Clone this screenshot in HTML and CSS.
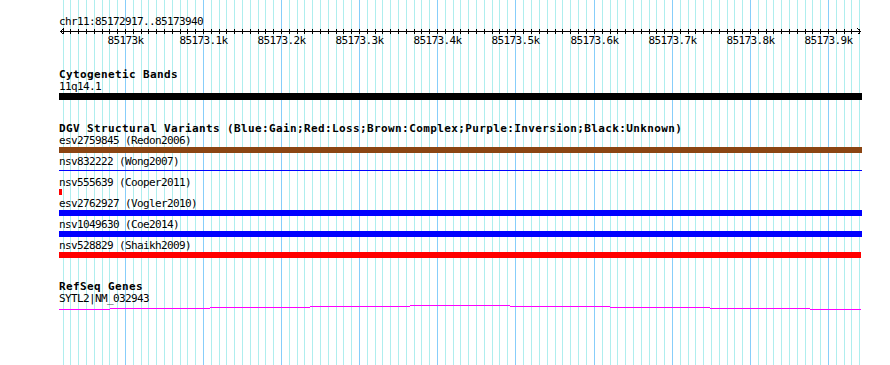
FILE: index.html
```html
<!DOCTYPE html>
<html lang="en">
<head>
<meta charset="utf-8">
<title>GBrowse details</title>
<link rel="stylesheet" href="styles.css">
</head>
<body>
<svg class="grid" width="890" height="365" viewBox="0 0 890 365" aria-hidden="true">
  <path class="grid-minor" d="M63.5 0V365M70.5 0V365M78.5 0V365M86.5 0V365M94.5 0V365M102.5 0V365M109.5 0V365M117.5 0V365M133.5 0V365M141.5 0V365M148.5 0V365M156.5 0V365M164.5 0V365M172.5 0V365M180.5 0V365M187.5 0V365M195.5 0V365M211.5 0V365M219.5 0V365M226.5 0V365M234.5 0V365M242.5 0V365M250.5 0V365M258.5 0V365M265.5 0V365M273.5 0V365M289.5 0V365M297.5 0V365M304.5 0V365M312.5 0V365M320.5 0V365M328.5 0V365M336.5 0V365M343.5 0V365M351.5 0V365M367.5 0V365M375.5 0V365M382.5 0V365M390.5 0V365M398.5 0V365M406.5 0V365M414.5 0V365M421.5 0V365M429.5 0V365M445.5 0V365M453.5 0V365M460.5 0V365M468.5 0V365M476.5 0V365M484.5 0V365M492.5 0V365M499.5 0V365M507.5 0V365M523.5 0V365M531.5 0V365M539.5 0V365M547.5 0V365M555.5 0V365M562.5 0V365M570.5 0V365M578.5 0V365M586.5 0V365M602.5 0V365M610.5 0V365M617.5 0V365M625.5 0V365M633.5 0V365M641.5 0V365M649.5 0V365M656.5 0V365M664.5 0V365M680.5 0V365M688.5 0V365M695.5 0V365M703.5 0V365M711.5 0V365M719.5 0V365M727.5 0V365M734.5 0V365M742.5 0V365M758.5 0V365M766.5 0V365M773.5 0V365M781.5 0V365M789.5 0V365M797.5 0V365M805.5 0V365M812.5 0V365M820.5 0V365M836.5 0V365M844.5 0V365M851.5 0V365M859.5 0V365"/>
  <path class="grid-major" d="M125.5 0V365M203.5 0V365M281.5 0V365M359.5 0V365M437.5 0V365M515.5 0V365M594.5 0V365M672.5 0V365M750.5 0V365M828.5 0V365"/>
</svg>

<main class="panel">
  <div class="coord">chr11:85172917..85173940</div>

  <svg class="ruler" width="890" height="20" viewBox="0 0 890 20">
    <rect class="ink" x="60" y="3" width="801" height="1"/>
    <path class="tick" d="M63.5 1V6M70.5 1V6M78.5 1V6M86.5 1V6M94.5 1V6M102.5 1V6M109.5 1V6M117.5 1V6M125.5 1V6M133.5 1V6M141.5 1V6M148.5 1V6M156.5 1V6M164.5 1V6M172.5 1V6M180.5 1V6M187.5 1V6M195.5 1V6M203.5 1V6M211.5 1V6M219.5 1V6M226.5 1V6M234.5 1V6M242.5 1V6M250.5 1V6M258.5 1V6M265.5 1V6M273.5 1V6M281.5 1V6M289.5 1V6M297.5 1V6M304.5 1V6M312.5 1V6M320.5 1V6M328.5 1V6M336.5 1V6M343.5 1V6M351.5 1V6M359.5 1V6M367.5 1V6M375.5 1V6M382.5 1V6M390.5 1V6M398.5 1V6M406.5 1V6M414.5 1V6M421.5 1V6M429.5 1V6M437.5 1V6M445.5 1V6M453.5 1V6M460.5 1V6M468.5 1V6M476.5 1V6M484.5 1V6M492.5 1V6M499.5 1V6M507.5 1V6M515.5 1V6M523.5 1V6M531.5 1V6M539.5 1V6M547.5 1V6M555.5 1V6M562.5 1V6M570.5 1V6M578.5 1V6M586.5 1V6M594.5 1V6M602.5 1V6M610.5 1V6M617.5 1V6M625.5 1V6M633.5 1V6M641.5 1V6M649.5 1V6M656.5 1V6M664.5 1V6M672.5 1V6M680.5 1V6M688.5 1V6M695.5 1V6M703.5 1V6M711.5 1V6M719.5 1V6M727.5 1V6M734.5 1V6M742.5 1V6M750.5 1V6M758.5 1V6M766.5 1V6M773.5 1V6M781.5 1V6M789.5 1V6M797.5 1V6M805.5 1V6M812.5 1V6M820.5 1V6M828.5 1V6M836.5 1V6M844.5 1V6M851.5 1V6M859.5 1V6"/>
    <path class="arrow" d="M63.5 0.5L60.5 3.5L63.5 6.5M857.5 0.5L860.5 3.5L857.5 6.5"/>
    <g class="ruler-labels">
      <text x="125.5" y="16">85173k</text>
      <text x="203.5" y="16">85173.1k</text>
      <text x="281.5" y="16">85173.2k</text>
      <text x="359.5" y="16">85173.3k</text>
      <text x="437.5" y="16">85173.4k</text>
      <text x="515.5" y="16">85173.5k</text>
      <text x="594.5" y="16">85173.6k</text>
      <text x="672.5" y="16">85173.7k</text>
      <text x="750.5" y="16">85173.8k</text>
      <text x="828.5" y="16">85173.9k</text>
    </g>
  </svg>

  <section class="track track-cyto">
    <h2 class="track-title">Cytogenetic Bands</h2>
    <div class="feat-label">11q14.1</div>
    <div class="bar bar-band"></div>
  </section>

  <section class="track track-dgv">
    <h2 class="track-title title-tight">DGV Structural Variants (Blue:Gain;Red:Loss;Brown:Complex;Purple:Inversion;Black:Unknown)</h2>
    <div class="feat">
      <div class="feat-label">esv2759845 (Redon2006)</div>
      <div class="bar bar-brown"></div>
    </div>
    <div class="feat">
      <div class="feat-label">nsv832222 (Wong2007)</div>
      <div class="thin-line"></div>
    </div>
    <div class="feat">
      <div class="feat-label">nsv555639 (Cooper2011)</div>
      <div class="bar bar-red bar-tiny"></div>
    </div>
    <div class="feat">
      <div class="feat-label">esv2762927 (Vogler2010)</div>
      <div class="bar bar-blue"></div>
    </div>
    <div class="feat">
      <div class="feat-label">nsv1049630 (Coe2014)</div>
      <div class="bar bar-blue"></div>
    </div>
    <div class="feat">
      <div class="feat-label">nsv528829 (Shaikh2009)</div>
      <div class="bar bar-red bar-short"></div>
    </div>
  </section>

  <section class="track track-genes">
    <h2 class="track-title">RefSeq Genes</h2>
    <div class="feat-label">SYTL2|NM_032943</div>
    <svg class="gene" width="890" height="6" viewBox="0 0 890 6">
      <rect x="59" y="4" width="51" height="1"/>
      <rect x="110" y="3" width="100" height="1"/>
      <rect x="210" y="2" width="100" height="1"/>
      <rect x="310" y="1" width="100" height="1"/>
      <rect x="410" y="0" width="100" height="1"/>
      <rect x="510" y="1" width="100" height="1"/>
      <rect x="610" y="2" width="100" height="1"/>
      <rect x="710" y="3" width="100" height="1"/>
      <rect x="810" y="4" width="51" height="1"/>
    </svg>
  </section>
</main>
</body>
</html>
```

FILE: styles.css
```css
html, body {
  margin: 0;
  padding: 0;
  background: #ffffff;
}

body {
  position: relative;
  width: 890px;
  height: 365px;
  overflow: hidden;
  color: #000000;
  font-family: "DejaVu Sans Mono", "Liberation Mono", monospace;
  font-size: 11px;
}

.grid {
  position: absolute;
  top: 0;
  left: 0;
  z-index: 0;
}

.grid-minor {
  stroke: #afeeee;
  stroke-width: 1;
  fill: none;
  shape-rendering: crispEdges;
}

.grid-major {
  stroke: #87cefa;
  stroke-width: 1;
  fill: none;
  shape-rendering: crispEdges;
}

.panel {
  position: relative;
  z-index: 1;
  padding-top: 15px;
}

.coord {
  padding-left: 59px;
  height: 13px;
  line-height: 13px;
  letter-spacing: -0.62px;
  white-space: nowrap;
}

.ruler {
  display: block;
}

.ruler .ink {
  fill: #000000;
}

.ruler .tick,
.ruler .arrow {
  stroke: #000000;
  stroke-width: 1;
  fill: none;
  shape-rendering: crispEdges;
}

.ruler-labels text {
  font-family: "DejaVu Sans Mono", "Liberation Mono", monospace;
  font-size: 11px;
  letter-spacing: -0.62px;
  text-anchor: middle;
  fill: #000000;
}

.track-cyto {
  margin-top: 20px;
}

.track-dgv {
  margin-top: 23px;
}

.track-genes {
  margin-top: 19px;
}

.track-title {
  margin: 0;
  padding-left: 59px;
  font-size: 11px;
  font-weight: bold;
  height: 13px;
  line-height: 13px;
  letter-spacing: 0.38px;
  white-space: nowrap;
}

.title-tight {
  height: 12px;
  line-height: 12px;
}

.feat-label {
  padding-left: 59px;
  height: 12px;
  line-height: 12px;
  letter-spacing: -0.62px;
  white-space: nowrap;
}

.feat {
  padding-bottom: 3px;
}

.bar {
  margin-left: 59px;
  width: 803px;
  height: 6px;
}

.bar-band {
  height: 7px;
  background: #000000;
}

.bar-brown {
  background: #8b4513;
}

.bar-blue {
  background: #0000ff;
}

.bar-red {
  background: #ff0000;
}

.bar-short {
  width: 802px;
}

.bar-tiny {
  width: 3px;
}

.thin-line {
  margin-left: 59px;
  margin-top: 2px;
  margin-bottom: 3px;
  width: 803px;
  height: 1px;
  background: #0000ff;
}

.gene {
  display: block;
}

.gene rect {
  fill: #ff00ff;
}
```
